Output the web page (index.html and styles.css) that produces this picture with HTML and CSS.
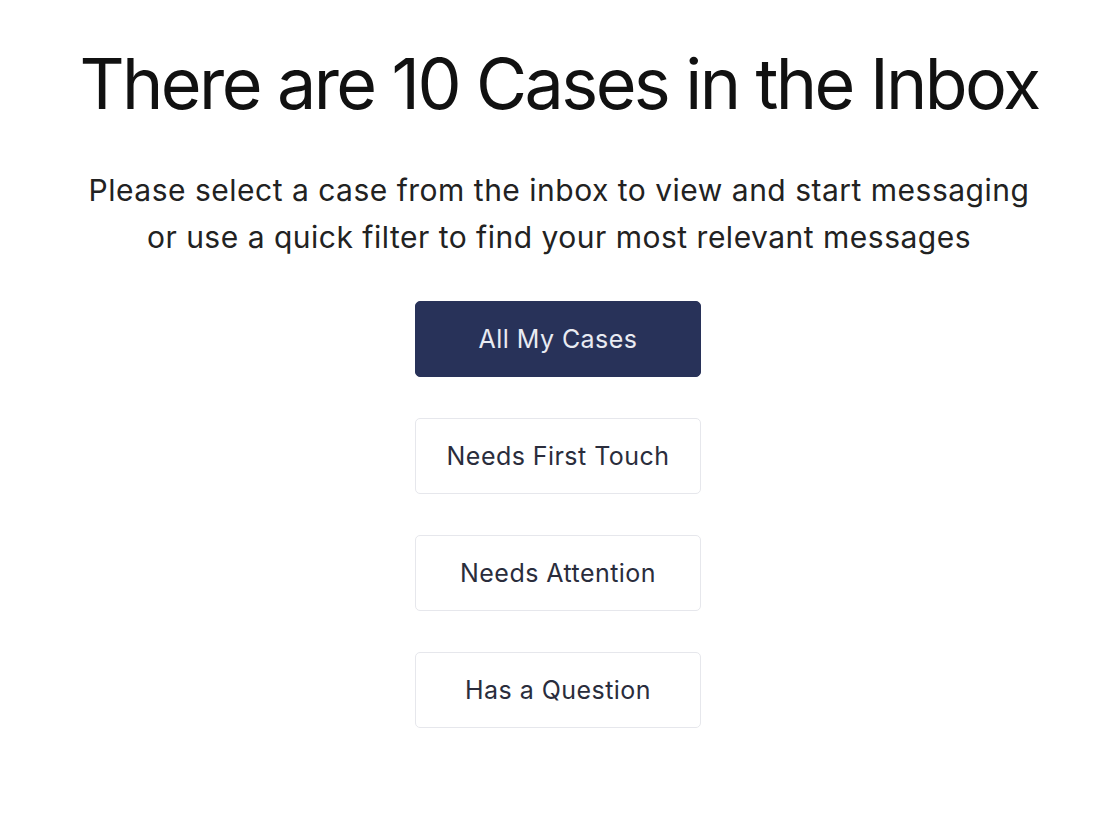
FILE: index.html
```html
<!DOCTYPE html>
<html lang="en">
<head>
<meta charset="utf-8">
<title>Inbox</title>
<link rel="stylesheet" href="styles.css">
</head>
<body>
<main class="page">
  <h1 class="title">There are 10 Cases in the Inbox</h1>
  <p class="subtitle">Please select a case from the inbox to view and start messaging<br>or use a quick filter to find your most relevant messages</p>
  <div class="filters">
    <button class="btn btn-primary">All My Cases</button>
    <button class="btn">Needs First Touch</button>
    <button class="btn">Needs Attention</button>
    <button class="btn">Has a Question</button>
  </div>
</main>
</body>
</html>
```

FILE: styles.css
```css
html, body {
  margin: 0;
  padding: 0;
  background: #ffffff;
}
.page {
  display: flex;
  flex-direction: column;
  align-items: center;
  font-family: Inter, "Open Sans", sans-serif;
  padding-top: 40px;
}
.title {
  margin: 0;
  font-size: 70px;
  line-height: 88px;
  font-weight: 400;
  color: #111111;
  letter-spacing: -2.6px;
  white-space: nowrap;
}
.subtitle {
  margin: 39px 0 0;
  font-size: 30px;
  line-height: 47px;
  color: #222222;
  text-align: center;
  letter-spacing: 0.5px;
  white-space: nowrap;
}
.filters {
  margin-top: 40px;
  margin-right: 2px;
  display: flex;
  flex-direction: column;
  gap: 41px;
}
.btn {
  width: 286px;
  height: 76px;
  border: 1px solid #e6e7ec;
  border-radius: 5px;
  background: #ffffff;
  color: #2a2d3c;
  font-family: Inter, "Open Sans", sans-serif;
  font-size: 25px;
  letter-spacing: 0.45px;
  padding: 0;
  cursor: pointer;
}
.btn-primary {
  background: #283259;
  border-color: #283259;
  color: #e9ebf2;
}
```
